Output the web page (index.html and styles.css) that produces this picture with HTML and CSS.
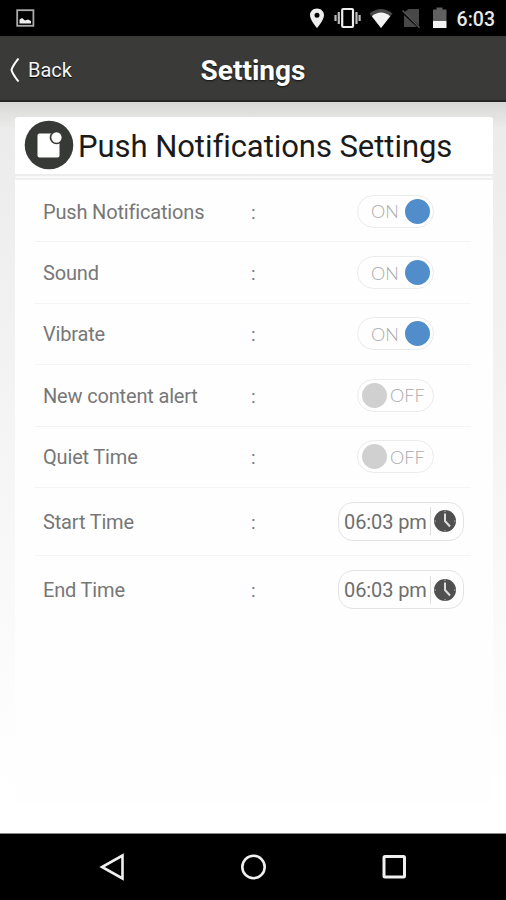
FILE: index.html
```html
<!DOCTYPE html>
<html lang="en">
<head>
<meta charset="utf-8">
<title>Settings</title>
<link rel="stylesheet" href="styles.css">
</head>
<body>
<div class="status">
  <svg class="status-icons" width="506" height="36" viewBox="0 0 506 36">
    <rect x="17.2" y="10.2" width="16.2" height="15.6" fill="none" stroke="#aaa" stroke-width="1.8"/>
    <path d="M19.500 23.500v-4l2.500-1.500 3 2.500 3-1 3 1.500v2.500z" fill="#eee"/>
    <path fill-rule="evenodd" d="M317 8.500c-4 0-7 2.900-7 6.700 0 5 7 12.800 7 12.800s7-7.800 7-12.800c0-3.800-3-6.700-7-6.700zm0 4.200a2.500 2.500 0 1 1 0 5 2.500 2.500 0 0 1 0-5z" fill="#eee"/>
    <rect x="342.200" y="9" width="10.800" height="18" rx="1" fill="none" stroke="#eee" stroke-width="2.200"/>
    <path d="M338.800 12v12M335.500 15v6M356.500 12v12M359.600 15v6" stroke="#bbb" stroke-width="2.200"/>
    <path d="M369.500 13.500Q381 4.500 392.500 13.500L381 28z" fill="#484848"/>
    <path d="M371.800 16.200Q381 8.700 390.200 16.200L381 28z" fill="#f3f3f3"/>
    <path d="M408.500 9H419v16.500L404 12.500zM404 15l13 12h-13z" fill="#484848"/>
    <path d="M402.500 10.500l17 17" stroke="#555" stroke-width="1.500"/>
    <path d="M433 9.500h3.500v-2h6v2h4V21H433z" fill="#606060"/>
    <path d="M433 21h13.500v7H433z" fill="#f3f3f3"/>
  </svg>
  <span class="clock">6:03</span>
</div>
<header class="bar">
  <a class="back"><svg width="12" height="26" viewBox="0 0 12 26"><path d="M10.500 1.500C7 6 4.500 9 3.500 13 4.500 17 7 20 10.500 24.500" fill="none" stroke="#fff" stroke-width="2"/></svg><span>Back</span></a>
  <h1>Settings</h1>
</header>
<main>
  <section class="head">
    <svg width="50" height="50" viewBox="0 0 50 50"><circle cx="25" cy="25" r="24.300" fill="#373936"/><rect x="13.500" y="13.500" width="22" height="24" rx="2" fill="#fff"/><circle cx="32.500" cy="17.500" r="6" fill="#fff" stroke="#373936" stroke-width="1.700"/></svg>
    <h2>Push Notifications Settings</h2>
  </section>
  <section class="card">
    <div class="row"><span class="label">Push Notifications</span><span class="colon">:</span><span class="toggle on"><span>ON</span><i></i></span></div>
    <div class="row"><span class="label">Sound</span><span class="colon">:</span><span class="toggle on"><span>ON</span><i></i></span></div>
    <div class="row"><span class="label">Vibrate</span><span class="colon">:</span><span class="toggle on"><span>ON</span><i></i></span></div>
    <div class="row"><span class="label">New content alert</span><span class="colon">:</span><span class="toggle"><i></i><span>OFF</span></span></div>
    <div class="row"><span class="label">Quiet Time</span><span class="colon">:</span><span class="toggle"><i></i><span>OFF</span></span></div>
    <div class="row tall"><span class="label">Start Time</span><span class="colon">:</span><span class="time"><span>06:03 pm</span><b></b><svg width="24" height="24" viewBox="0 0 24 24"><circle cx="12" cy="12" r="11" fill="#505050"/><path d="M12 4.500v7.500l5 5.500" fill="none" stroke="#ddd" stroke-width="2"/><path d="M12 1.500v1.500M12 21v1.500M1.500 12H3M21 12h1.500" stroke="#bbb"/></svg></span></div>
    <div class="row tall"><span class="label">End Time</span><span class="colon">:</span><span class="time"><span>06:03 pm</span><b></b><svg width="24" height="24" viewBox="0 0 24 24"><circle cx="12" cy="12" r="11" fill="#505050"/><path d="M12 4.500v7.500l5 5.500" fill="none" stroke="#ddd" stroke-width="2"/><path d="M12 1.500v1.500M12 21v1.500M1.500 12H3M21 12h1.500" stroke="#bbb"/></svg></span></div>
  </section>
</main>
<nav>
  <svg width="28" height="30" viewBox="0 0 28 30"><path d="M24.500 3.500v23L4 15z" fill="none" stroke="#f0f0f0" stroke-width="2.600"/></svg>
  <svg width="28" height="30" viewBox="0 0 28 30"><circle cx="14.500" cy="15" r="11.200" fill="none" stroke="#f0f0f0" stroke-width="2.600"/></svg>
  <svg width="28" height="30" viewBox="0 0 28 30"><rect x="4" y="4.500" width="20.500" height="20.500" rx="1" fill="none" stroke="#f0f0f0" stroke-width="3"/></svg>
</nav>
</body>
</html>
```
FILE: styles.css
```css
* { box-sizing: border-box; }
body { margin: 0; width: 506px; height: 900px; display: flex; flex-direction: column; overflow: hidden; background: #fff; font-family: Roboto, sans-serif; }
svg { display: block; flex: none; }
h1, h2 { margin: 0; }
.status { position: relative; height: 36px; flex: none; background: #000; display: flex; align-items: center; justify-content: flex-end; padding: 2px 11px 0 0; }
.status-icons { position: absolute; left: 0; top: 0; }
.clock { color: #e8e8e8; font-size: 19.5px; font-weight: 500; }
.bar { height: 66px; flex: none; background: #3a3b38; border-bottom: 2px solid #252622; display: grid; grid-template-columns: 1fr auto 1fr; align-items: center; color: #fff; padding: 4px 8px 0; }
.back { display: flex; align-items: center; gap: 8px; font-size: 20px; color: #f4f4f4; text-shadow: 0 1px 1px #000; }
h1 { font-size: 28px; line-height: 32px; font-weight: 700; padding-top: 1px; text-shadow: 0 1px 2px #111; }
main { flex: 1; padding: 15px 13px 0 15px; background: linear-gradient(#d8d9d6 0, #dededd 8px, rgba(235, 235, 235, 0) 26px), linear-gradient(#ebebeb, #fff 690px); }
.head { height: 57px; background: #fff; border-radius: 3px 3px 0 0; display: flex; align-items: center; padding-left: 9px; gap: 4px; }
.head svg { margin-top: -1px; }
h2 { font-size: 31px; font-weight: 400; letter-spacing: -.05px; color: #1a1a1a; white-space: nowrap; padding-top: 2px; }
.card { height: 626px; margin-top: 2px; border-top: 2px solid #fafafa; box-shadow: inset 0 2px #efefef; border-radius: 2px; background: #fefefe; padding: 3px 22px 0 20px; }
.row { height: 61.400px; border-bottom: 1px solid #f4f4f4; display: grid; grid-template-columns: 208px 1fr auto; align-items: center; padding-left: 8px; font-size: 20px; color: #777; }
.label { letter-spacing: -.17px; padding-top: 1px; }
.tall { height: 68px; }
.row:last-child { border: 0; }
.colon { font-size: 19px; padding-top: 2px; }
.toggle { width: 77px; height: 33px; border: 1px solid #ebebeb; border-radius: 17px; display: flex; align-items: center; margin-right: 37px; font: 300 18px Lato, sans-serif; color: #aaa; padding-left: 4px; gap: 3px; }
.toggle i { width: 25px; height: 25px; border-radius: 50%; background: #d0d0d0; }
.toggle.on { padding-left: 13px; gap: 6px; }
.on i { background: #508dca; }
.time { width: 126px; height: 39px; border: 1.500px solid #e3e3e3; border-radius: 15px; display: flex; align-items: center; padding-left: 5px; margin-right: 7px; white-space: nowrap; color: #6e6e6e; letter-spacing: -.1px; }
.time > span { padding-top: 1px; }
.time b { width: 1px; height: 28px; background: #ddd; margin: 0 2px 0 3px; }
nav { height: 67px; flex: none; background: #000; border-top: 1px solid #888; display: flex; align-items: center; justify-content: center; gap: 113px; }
```
